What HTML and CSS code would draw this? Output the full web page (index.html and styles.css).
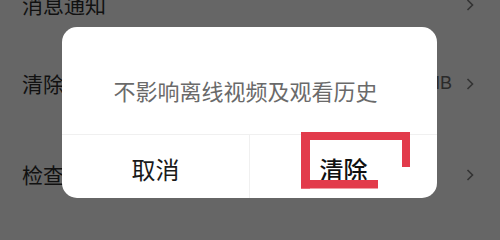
FILE: index.html
```html
<!DOCTYPE html>
<html lang="zh-CN">
<head>
<meta charset="utf-8">
<title>清除缓存</title>
<link rel="stylesheet" href="styles.css">
</head>
<body>
<div class="screen">
  <div class="list">
    <div class="row">
      <span class="label">消息通知</span>
      <span class="right"><svg class="chev" viewBox="0 0 8 12"><path d="M1.5 1 L6.5 6 L1.5 11" /></svg></span>
    </div>
    <div class="row">
      <span class="label">清除缓存</span>
      <span class="right"><span class="value">0.00MB</span><svg class="chev" viewBox="0 0 8 12"><path d="M1.5 1 L6.5 6 L1.5 11" /></svg></span>
    </div>
    <div class="row section">
      <span class="label">检查更新</span>
      <span class="right"><svg class="chev" viewBox="0 0 8 12"><path d="M1.5 1 L6.5 6 L1.5 11" /></svg></span>
    </div>
  </div>

  <div class="dialog">
    <div class="message">不影响离线视频及观看历史</div>
    <div class="actions">
      <div class="btn cancel">取消</div>
      <div class="btn confirm">清除</div>
    </div>
  </div>

  <svg class="mark" viewBox="0 0 110 57" width="110" height="57">
    <rect x="0" y="0" width="109" height="8" />
    <rect x="0" y="0" width="9" height="56.5" />
    <rect x="101" y="0" width="8" height="35" />
    <rect x="0" y="48" width="77" height="8.5" />
  </svg>
</div>
</body>
</html>
```

FILE: styles.css
```css
* { box-sizing: border-box; }
html, body {
  margin: 0;
  padding: 0;
  background: #666666;
}
body {
  font-family: "Noto Sans CJK SC", "Noto Sans", sans-serif;
}
.screen {
  position: relative;
  width: 500px;
  height: 219px;
  overflow: hidden;
  background: #666666;
}
.list {
  display: flex;
  flex-direction: column;
  margin-top: -35px;
}
.row {
  height: 79px;
  display: flex;
  align-items: center;
  justify-content: space-between;
  padding: 0 26px 0 22px;
}
.row.section {
  margin-top: 12px;
}
.label {
  font-size: 21px;
  color: #111111;
  line-height: 1;
}
.right {
  display: flex;
  align-items: center;
  gap: 14px;
}
.value {
  font-family: "Liberation Sans", sans-serif;
  font-size: 18px;
  color: #2a2a2a;
}
.chev {
  width: 8px;
  height: 12px;
  fill: none;
  stroke: #333333;
  stroke-width: 1.6;
}
.dialog {
  position: absolute;
  left: 62px;
  top: 27px;
  width: 375px;
  height: 171px;
  background: #ffffff;
  border-radius: 15px;
  display: flex;
  flex-direction: column;
  overflow: hidden;
}
.message {
  height: 108px;
  padding: 18px 8px 0 0;
  display: flex;
  align-items: center;
  justify-content: center;
  font-size: 22px;
  color: #6a6a6a;
  border-bottom: 1px solid #f0f0f0;
}
.actions {
  flex: 1;
  display: flex;
}
.btn {
  flex: 1;
  display: flex;
  align-items: center;
  justify-content: center;
  font-size: 24px;
  color: #1a1a1a;
  padding-top: 4px;
}
.cancel {
  border-right: 1px solid #f0f0f0;
}
.confirm {
  font-weight: 500;
  color: #111111;
}
.mark {
  position: absolute;
  left: 301px;
  top: 132px;
  fill: #e23b4b;
}
```
